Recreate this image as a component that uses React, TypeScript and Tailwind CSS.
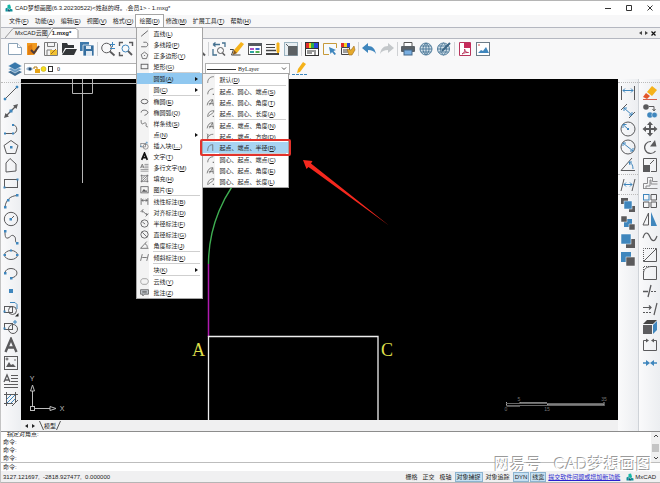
import { useState } from 'react';
import type { ReactNode } from 'react';
import clsx from 'clsx';

const DARK = '#5a5a5c';
const BLUE = '#3f86bd';
const AMBER = '#f5b21a';

type Item = { label: string; hotkey: string; icon?: string; arrow?: boolean };

const shapes: Record<string, ReactNode> = {
  /* file + view toolbar */
  newFile: (
    <g fill="#fff" stroke="#8ba3b8">
      <path d="M1.5 2.5h9l4 4v7h-13z" />
      <path d="M10.5 2.5v4h4" />
    </g>
  ),
  importFile: (
    <g>
      <path d="M2 2h10v8l-3 4H2z" fill="#f19a20" />
      <path d="M3 5l4-2 1 10-5 1z" fill="#e07c10" />
      <path d="M6 9l3 3 5-7" stroke="#4b3a3a" strokeWidth="2" />
    </g>
  ),
  saveAs: (
    <g>
      <path d="M1.5 1.5h12l1 1v12h-13z" fill="#f4f4f4" stroke="#7a7a7a" />
      <path d="M4.5 1.5v4h7v-4M4 14V9h5" stroke="#7a7a7a" />
      <rect x="7" y="9" width="7" height="5" fill="#f1c232" />
      <path d="M8 13l5-5" stroke="#a06a20" />
    </g>
  ),
  open: (
    <g fill="#333638">
      <path d="M1 2h5l1 2h6v3H4l-3 6z" />
      <path d="M5 8h11l-3 6H1z" />
    </g>
  ),
  save: (
    <g>
      <path d="M1 1h9v9H1z" fill="#3d78aa" />
      <path d="M4 4h11v11H4z" fill="#356e9f" stroke="#fff" strokeWidth=".7" />
      <path d="M7 5h5v3H7zM7 10h6v5H7z" fill="#dfe9f2" />
    </g>
  ),
  zoomPlus: (
    <g stroke={DARK}>
      <circle cx="6.500" cy="7" r="4.800" />
      <path d="M10 10.500l4.500 4" strokeWidth="1.800" />
      <path d="M12.500 1v5M10 3.500h5M10 7.500h5" stroke={BLUE} />
    </g>
  ),
  zoomExtents: (
    <g stroke={DARK}>
      <path d="M1.500 5V1.500H5M11 1.500h3.500V5M5 14.500H1.500V11" strokeWidth="1.400" />
      <circle cx="7.500" cy="7.500" r="3.500" stroke={BLUE} />
      <path d="M10 10l4 4" strokeWidth="1.800" />
    </g>
  ),
  zoomOut: (
    <g stroke={DARK}>
      <circle cx="7" cy="6" r="4.500" />
      <path d="M10 9.500l5 5" strokeWidth="2" />
    </g>
  ),
  zoomPrev: (
    <g stroke={DARK}>
      <path d="M2 3.500h7M2 3.500l2.500-2M2 3.500l2.500 2M11 2h3v4M2 8v6h4" stroke="#44708f" strokeWidth="1.300" />
      <circle cx="9.500" cy="9.500" r="3" />
      <path d="M11.500 12l2.500 2.500" strokeWidth="1.500" />
    </g>
  ),
  pencil: (
    <g>
      <path d="M12 1l3 2-7 9-4 1 1-4z" fill={AMBER} />
      <path d="M5 9l3 3-4 2z" fill="#8a5a20" />
      <path d="M1 8.500h3.500l-2 5.500h9" stroke="#444" />
    </g>
  ),
  propsList: (
    <g>
      <rect x="1.500" y="2.500" width="13" height="11" fill="#fff" stroke="#555" />
      <rect x="1" y="2" width="14" height="3" fill="#555a60" />
      <rect x="3" y="7" width="4" height="2" fill="#b04fc4" />
      <rect x="3" y="10" width="4" height="2" fill="#2fa4a0" />
      <rect x="8.500" y="7" width="4" height="2" fill="#3c62c8" />
      <rect x="8.500" y="10" width="4" height="2" fill="#50b050" />
    </g>
  ),
  lineWeight: (
    <g stroke="#444">
      <path d="M1 3.500h9M1 6.500h9" />
      <path d="M1 9.500h10" strokeWidth="1.500" />
      <path d="M1 13h13" strokeWidth="2" />
      <path d="M12 2h2v9l-1 1-1-1z" fill={AMBER} stroke={AMBER} />
    </g>
  ),
  block: (
    <g>
      <rect x="1.500" y="1.500" width="13" height="13" stroke="#9bb3c0" fill="#e8eef2" />
      <rect x="5" y="5" width="9.500" height="9.500" fill="#5d6164" />
      <path d="M3 3l3 3" stroke="#5d6164" />
    </g>
  ),
  palette: (
    <g>
      <rect x="1.500" y="1.500" width="13" height="13" fill="#fff" stroke="#333" />
      <path d="M2 2h3v5H2z" fill="#e22a2a" />
      <path d="M5 2h2v5H5z" fill="#f0d020" />
      <path d="M7 2h3v5H7z" fill="#2cae4a" />
      <path d="M10 2h4v5h-4z" fill="#2745d8" />
      <path d="M2 7.500h12M3 10h7M3 12h5M11 9v5" stroke="#333" />
    </g>
  ),
  selectArea: (
    <g>
      <path d="M7 13.500H1.500v-11h13V7" stroke="#c79a3a" fill="#f6fafc" />
      <path d="M7 6l7 3-2.500 1L14 13l-1.500 1-2.500-3-1.500 2z" fill={BLUE} />
    </g>
  ),
  paletteMatch: (
    <g>
      <path d="M1 2h3v4H1z" fill="#e22a2a" />
      <path d="M4 2h3v4H4z" fill="#f0d020" />
      <path d="M7 2h3v4H7z" fill="#2745d8" />
      <path d="M1.500 6.500h8v7h-8zM3 9h5M3 11h5" stroke="#444" />
      <path d="M7 8l4 1 3-4 1 4-3 5H9z" fill="#e5a92c" stroke="#9b6b20" strokeWidth=".6" />
    </g>
  ),
  undo: <path d="M1 7l6-5v3c5 0 7 3 8 8-2-3-4-4-8-4v3z" fill={BLUE} />,
  redo: <path d="M15 7L9 2v3c-5 0-7 3-8 8 2-3 4-4 8-4v3z" fill="#c3c7ca" />,
  printer: (
    <g>
      <path d="M4 1.500h8v4H4z" fill="#fff" stroke="#555" />
      <rect x="1" y="5" width="14" height="6" rx="1" fill="#5b6268" />
      <rect x="4" y="9" width="8" height="5" fill="#79aee0" stroke="#46698a" />
    </g>
  ),
  globe: (
    <g stroke="#527d9c">
      <circle cx="8" cy="8" r="6" fill="#d2e1ea" />
      <path d="M2 8h12M3 5h10M3 11h10M8 2v12M8 2c-4 3-4 9 0 12M8 2c4 3 4 9 0 12" />
    </g>
  ),
  globeEdit: (
    <g stroke="#527d9c">
      <circle cx="7.500" cy="8" r="6" fill="#d2e1ea" />
      <path d="M1.500 8h12M2.500 5h10M2.500 11h10M7.500 2c-4 3-4 9 0 12M7.500 2c4 3 4 9 0 12" />
      <path d="M6 10l8-8" stroke="#3b6584" strokeWidth="2" />
    </g>
  ),
  pdf: (
    <g>
      <path d="M2.500 1.500h11v13h-11z" fill="#fff" stroke="#b8345c" />
      <rect x="7" y="2" width="7" height="5" fill="#c62a5a" />
      <path d="M5 13c3-2 3-4 2.500-5 .5 3 2 3.500 4 3.500-2 0-4 0-6.500 1.500z" stroke="#b8345c" />
    </g>
  ),
  picture: (
    <g>
      <rect x="1.500" y="1.500" width="13" height="13" fill="#fff" stroke="#6c7c88" />
      <path d="M3 12l3-3 2 1 3-4 3 6z" fill={BLUE} />
      <circle cx="4" cy="4" r=".8" fill="#c33" />
    </g>
  ),
  layers: (
    <g>
      <path d="M8 8l7 3-7 4-7-4z" fill="#3c6c94" />
      <path d="M8 5l7 3-7 4-7-4z" fill="#6b9cc4" stroke="#fff" strokeWidth=".5" />
      <path d="M8 1l7 4-7 4-7-4z" fill="#3878ab" stroke="#fff" strokeWidth=".5" />
    </g>
  ),
  pencilLine: (
    <g>
      <path d="M11 1l3 2-6 8-3 1 1-4z" fill={AMBER} />
      <path d="M0 13.500h16" stroke={BLUE} strokeDasharray="3 1" />
    </g>
  ),

  /* draw tools */
  line: (
    <g>
      <path d="M2 14L14 2" stroke={DARK} />
      <path d="M1 13h2v2H1zM13 1h2v2h-2z" fill={BLUE} stroke={BLUE} strokeWidth=".5" />
    </g>
  ),
  ray: (
    <g>
      <path d="M3 13L13 3" stroke={DARK} strokeWidth="1.300" />
      <path d="M15 1l-1.500 5L10 2.500zM1 15l1.500-5L6 13.500z" fill={DARK} />
      <rect x="6.500" y="6.500" width="3" height="3" fill={BLUE} />
    </g>
  ),
  polyline: (
    <g>
      <path d="M1 12.500h9c5 0 5-8.500 0-8.500" stroke={DARK} />
      <path d="M1 11.500h2v2H1zM9 3h2v2H9zM9 11.500h2v2H9z" fill={BLUE} />
    </g>
  ),
  polygon: (
    <g>
      <path d="M8 1.500L15 6.500l-2.500 8h-9L1 6.500z" stroke={DARK} />
      <rect x="7" y="7" width="2.500" height="2.500" fill={BLUE} />
    </g>
  ),
  freePolygon: <path d="M7 1.500L13 7v7l-10 1V6z" stroke={DARK} />,
  rect: (
    <g>
      <rect x="1.500" y="4.500" width="13" height="8" stroke={DARK} />
      <path d="M13.500 3.500h2v2h-2zM.500 11.500h2v2h-2z" fill={BLUE} />
    </g>
  ),
  arc: (
    <g>
      <path d="M2 14C3 6 8 3 14 2.500" stroke={DARK} />
      <path d="M1 13h2.500v2.500H1zM4 6h2.500v2.500H4zM13 1h2.500v2.500H13z" fill={BLUE} />
    </g>
  ),
  circle: (
    <g>
      <circle cx="8" cy="8" r="6.700" stroke={DARK} />
      <path d="M8 8l3-3" stroke={DARK} />
      <rect x="6.500" y="7" width="2.500" height="2.500" fill={BLUE} />
    </g>
  ),
  spline: (
    <g>
      <path d="M2 2c0 4 0 8 3 7s3-4 6-2 0 6 3 7" stroke={DARK} />
      <path d="M1 1h2.500v2.500H1zM13 13h2.500v2.500H13z" fill={BLUE} />
    </g>
  ),
  ellipse: (
    <g>
      <ellipse cx="8" cy="8" rx="6.500" ry="4.500" stroke={DARK} />
      <path d="M.500 7H3v2H.500zM13 7h2.500v2H13zM7 2.500h2v2H7z" fill={BLUE} />
    </g>
  ),
  ellipseArc: (
    <g>
      <path d="M2 8C2 2 14 2 14 8c0 3-3 4.500-6 5" stroke={DARK} />
      <path d="M1 7h2.500v2.500H1zM7 12h2.500v2.500H7z" fill={BLUE} />
    </g>
  ),
  point: <rect x="6" y="6" width="4" height="4" fill={BLUE} />,
  makeBlock: (
    <g stroke={DARK}>
      <rect x="1.500" y="5.500" width="8" height="6" />
      <circle cx="9.500" cy="9.500" r="4" />
      <path d="M7 1.500h5l2 2V8" stroke={BLUE} />
      <path d="M15.500 12v3.500H12z" fill="#222" stroke="none" />
      <rect x=".500" y="9.500" width="2" height="2" fill={BLUE} stroke="none" />
    </g>
  ),
  insertBlock: (
    <g stroke={DARK}>
      <rect x="1.500" y="4.500" width="8" height="6" />
      <circle cx="10" cy="10" r="4.500" />
      <path d="M12 1v4M10 3h4" stroke={BLUE} />
      <rect x=".500" y="8.500" width="2" height="2" fill={BLUE} stroke="none" />
    </g>
  ),
  text: <path d="M2.500 15L8 2l5.500 13M5 10.500h6" stroke={DARK} strokeWidth="2.400" />,
  image: (
    <g>
      <rect x="1.500" y="1.500" width="13" height="13" stroke={DARK} />
      <path d="M3 12l3-5 2 3 2-1 3 3z" fill={DARK} />
      <circle cx="4" cy="4" r="1" stroke={DARK} />
      <circle cx="12" cy="5" r=".8" fill={DARK} />
    </g>
  ),
  mtext: (
    <g stroke={DARK}>
      <path d="M1 9L4 2l3 7M2 7h4" strokeWidth="1.300" />
      <path d="M8 2.500h7M8 5.500h7M8 8.500h7M1 11.500h14M1 14.500h14" />
    </g>
  ),
  hatch: (
    <g stroke={DARK}>
      <path d="M3.500 1v14M12.500 1v10M1 3.500h14M1 12.500h9" />
      <path d="M4 8l4-4M4 12l8-8M8 12l4-4" stroke={BLUE} />
      <path d="M9 15l6-6" />
    </g>
  ),

  /* dimension + order column */
  dimLinear: (
    <g stroke={DARK}>
      <path d="M1.500 1v14M14.500 1v14" />
      <path d="M3 5.500h10M3 5.500l2-2M3 5.500l2 2M13 5.500l-2-2M13 5.500l-2 2" stroke={BLUE} />
    </g>
  ),
  dimAligned: (
    <g stroke={DARK}>
      <path d="M1 7l6-6M9 15l6-6" />
      <path d="M4 5l8 7M4 5h3M4 5v3M12 12H9M12 12V9" stroke={BLUE} />
    </g>
  ),
  dimRadius: (
    <g>
      <circle cx="8" cy="8" r="7" stroke={DARK} />
      <path d="M8 8L3.500 4M3 3.500h3.500M3 3.500V7" stroke={BLUE} />
      <rect x="7" y="7" width="2" height="2" fill={BLUE} />
    </g>
  ),
  dimDiameter: (
    <g>
      <circle cx="8" cy="8" r="7" stroke={DARK} />
      <path d="M3 4l10 8M3 4h3M3 4v3M13 12h-3M13 12V9" stroke={BLUE} />
    </g>
  ),
  dimAngle: (
    <g>
      <path d="M12 1L1 13.500h14" stroke={DARK} />
      <path d="M9 5c3 1 4 4 4 7M9 5h3M9 5l1 3" stroke={BLUE} />
    </g>
  ),
  dimOblique: (
    <g stroke={DARK}>
      <path d="M4 2L1 14M15 2l-3 12" />
      <path d="M4 7.500h8M4 7.500l2-2M4 7.500l2 2M12 7.500l-2-2M12 7.500l-2 2" stroke={BLUE} />
    </g>
  ),
  orderFront: (
    <g>
      <path d="M1 1h7v6H1zM9 9h6v6H9z" fill={DARK} />
      <rect x="4" y="4" width="8" height="8" fill={BLUE} stroke="#fff" strokeWidth=".5" />
    </g>
  ),
  orderBack: (
    <g>
      <rect x="4" y="4" width="8" height="8" fill={BLUE} />
      <path d="M1 1h6v6H1zM9 9h6v6H9z" fill={DARK} stroke="#fff" strokeWidth=".5" />
    </g>
  ),
  orderAbove: (
    <g>
      <rect x="6" y="6" width="9" height="9" fill={DARK} />
      <rect x="1" y="1" width="10" height="10" fill={BLUE} stroke="#fff" strokeWidth=".5" />
    </g>
  ),
  orderBelow: (
    <g>
      <rect x="1" y="1" width="10" height="10" fill={BLUE} />
      <rect x="6" y="6" width="9" height="9" fill={DARK} stroke="#fff" strokeWidth=".5" />
    </g>
  ),

  /* modify column */
  erase: (
    <g>
      <path d="M10 1l5 4-5 6-5-4z" fill={AMBER} />
      <path d="M4 8l4 3-3 3-4-2z" fill="#e2562b" />
      <path d="M1 14.500h14" stroke="#d6604a" />
    </g>
  ),
  copy: (
    <g>
      <circle cx="4" cy="4" r="2.800" fill={DARK} />
      <circle cx="8" cy="12" r="2.800" fill={BLUE} />
      <circle cx="12.500" cy="12" r="2.800" fill={BLUE} stroke="#fff" strokeWidth=".5" />
      <path d="M7 3.500h5V7M10.500 6L12 8l1.500-2" stroke={DARK} />
    </g>
  ),
  move: (
    <g>
      <path d="M8 3v10M3 8h10" stroke={DARK} strokeWidth="2" />
      <path d="M8 .500L11 4H5zM8 15.500L5 12h6zM.500 8L4 5v6zM15.500 8L12 11V5z" fill={DARK} />
    </g>
  ),
  rotate: (
    <g>
      <path d="M9 2.500A6 6 0 1 0 13.500 12" stroke={DARK} strokeWidth="1.200" />
      <path d="M13 1l1.500 6.500H8z" fill={DARK} />
    </g>
  ),
  scale: (
    <g>
      <path d="M1.500 8V1.500h13v13H9" stroke={DARK} />
      <rect x="1" y="8" width="7" height="7" fill={DARK} />
      <path d="M8 7l4-4" stroke={DARK} />
    </g>
  ),
  offset: (
    <g stroke="#8c8c8e">
      <path d="M1.500 14V8.500h4v-6h5v4h5" />
      <path d="M4 14v-3h4V5h1v4h6.500M1.500 13.500h14" />
    </g>
  ),
  array: (
    <g stroke={DARK}>
      <rect x="1.500" y="1.500" width="5.500" height="5.500" stroke={BLUE} />
      <path d="M9 1.500h5.500V7H9zM1.500 9H7v5.500H1.500zM9 9h5.500v5.500H9z" />
    </g>
  ),
  mirror: (
    <g>
      <path d="M6.500 2v12H1z" stroke={DARK} />
      <path d="M9 1v14h6z" fill={BLUE} />
    </g>
  ),
  wave: <path d="M1 9c2-7 5-6 7-1s5 5 7-1" stroke={DARK} strokeWidth="1.200" />,
  chamfer: (
    <g stroke={DARK}>
      <path d="M1.500 14.500h13v-13M1.500 14.500L14.500 1.500" />
      <path d="M1.500 14V1.500H14" strokeDasharray="1 1" />
    </g>
  ),
  fillet: (
    <g stroke={DARK}>
      <path d="M1.500 8v6.500h13v-13H9C4 2 2 4 1.500 8" />
      <path d="M1.500 7V1.500H8" strokeDasharray="1 1" />
    </g>
  ),
  trim: (
    <g stroke={DARK}>
      <path d="M1 8.500h5M9 2L6 14" strokeWidth="1.300" />
      <path d="M9 8.500h6" strokeDasharray="2 1" />
    </g>
  ),
  extend: (
    <g stroke={DARK}>
      <path d="M1 6.500h8M7 4.500l2 2-2 2M15 2l-3 12" strokeWidth="1.200" />
      <path d="M1 11.500h8" strokeDasharray="2 1" />
    </g>
  ),
  cube: (
    <g>
      <path d="M1 6h9v9H1z" fill="#5d5d60" />
      <path d="M1 5l4-4h10l-4 4z" fill="#444" />
      <path d="M11 6l4-4v9l-4 4z" fill={BLUE} />
    </g>
  ),
  breakLine: (
    <g stroke={DARK}>
      <path d="M5 3.500H1.500v10h13v-10H11" />
      <path d="M4 1.500v4l3-2zM12 1.500v4l-3-2z" fill={DARK} stroke="none" />
    </g>
  ),
  join: (
    <g>
      <path d="M1 8h5M10 8h5" stroke={BLUE} strokeWidth="1.300" />
      <path d="M4 5v6l4-3zM12 5v6L8 8z" fill={BLUE} />
    </g>
  ),

  /* drop-down menu glyphs */
  mLine: <path d="M2 13L14 3" stroke={DARK} strokeWidth="1.600" />,
  mPolyline: <path d="M2 12h8c5 0 5-8 0-8H6" stroke={DARK} strokeWidth="1.500" />,
  mPolygon: (
    <g stroke={DARK} strokeWidth="1.400">
      <path d="M8 2l6 4.500-2.500 7h-7L2 6.500z" />
      <path d="M7 8h2" />
    </g>
  ),
  mRect: <rect x="2" y="4" width="12" height="8" stroke={DARK} strokeWidth="1.600" />,
  mEllipse: <ellipse cx="8" cy="8" rx="6" ry="4" stroke={DARK} strokeWidth="1.600" />,
  mEllipseArc: <path d="M2 8C2 2 14 3 14 8c0 2-3 4-6 5" stroke={DARK} strokeWidth="1.600" />,
  mSpline: <path d="M2 2c0 6 1 8 4 6s6-1 5 2 1 4 3 4" stroke={DARK} strokeWidth="1.400" />,
  mText: <path d="M3 14L8 2l5 12M5 10h6" stroke="#111" strokeWidth="3" />,
  mImage: (
    <g>
      <rect x="1.500" y="3" width="13" height="11" stroke={DARK} strokeWidth="1.400" />
      <path d="M3 12l4-5 3 3 1-1 2 3z" fill={DARK} />
    </g>
  ),
  mHatch: (
    <g stroke={DARK} strokeWidth="1.200">
      <path d="M3 1v14M13 1v14M1 3h14M1 13h14M4 8l4-4M4 12l8-8M8 12l4-4" />
    </g>
  ),
  mDimLinear: <path d="M2 2v12M14 2v12M3 6h10M6 4L3 6l3 2M10 4l3 2-3 2" stroke={DARK} strokeWidth="1.400" />,
  mDimAligned: <path d="M1 7l5-5M10 15l5-5M4 5l8 7M4 5v3M12 12V9" stroke={DARK} strokeWidth="1.400" />,
  mDimRadius: (
    <g stroke={DARK} strokeWidth="1.500">
      <circle cx="8" cy="8" r="6.500" />
      <path d="M9 9L4 5" />
    </g>
  ),
  mDimDiameter: (
    <g stroke={DARK} strokeWidth="1.500">
      <circle cx="8" cy="8" r="6.500" />
      <path d="M4 4l8 8" />
    </g>
  ),
  mDimAngle: <path d="M12 1L1 13h14M9 5c3 1 4 4 4 7" stroke={DARK} strokeWidth="1.400" />,
  mDimOblique: <path d="M4 2L1 14M15 2l-3 12M4 8h8" stroke={DARK} strokeWidth="1.400" />,
  cloud: <path d="M5 3h6c5 1 5 8 0 10H5C0 12 0 4 5 3z" stroke="#8a8a8a" strokeWidth="1.300" />,
  comment: (
    <g stroke={DARK} strokeWidth="1.400">
      <path d="M1 3h14v8H8l-3 3v-3H1z" fill="#c6ccd2" />
      <path d="M4 6h8M4 8.500h8" />
    </g>
  ),
  arcPlain: <path d="M3 14C3 7 7 3 14 3" stroke="#666" strokeWidth="1.400" />,
  arcCenter: (
    <g stroke="#666" strokeWidth="1.400">
      <path d="M3 13C3 7 7 3 13 3" />
      <path d="M12 13h2" strokeWidth="2" />
    </g>
  ),
  arcAngle: (
    <g stroke="#666" strokeWidth="1.400">
      <path d="M2 13C3 7 6 3 12 3M12 3L6 13M5 10h8M12 3l1 11" />
    </g>
  ),
  arcLength: (
    <g stroke="#666" strokeWidth="1.400">
      <path d="M3 14C3 7 7 3 14 3c0 5-5 5-10 10" />
      <path d="M12 13h2" strokeWidth="2" />
    </g>
  ),
  arcDir: <path d="M3 14V4M3 10c2-4 5-6 10-6M2 3l3 3" stroke="#666" strokeWidth="1.400" />,
  arcRadius: <path d="M3 14C3 7 6 3 12 3v11" stroke="#666" strokeWidth="1.400" />,
};

function Icon({ name, small }: { name: string; small?: boolean }) {
  return (
    <svg
      viewBox="0 0 16 16"
      fill="none"
      className={clsx('shrink-0', small ? 'size-[9px]' : 'size-4')}
      aria-hidden="true"
    >
      {shapes[name]}
    </svg>
  );
}

function ToolButton({ name }: { name: string }) {
  return (
    <button type="button" aria-label={name} className="flex size-4 shrink-0 items-center justify-center">
      <Icon name={name} />
    </button>
  );
}

const menus = [
  ['文件', 'F'],
  ['功能', 'A'],
  ['编辑', 'E'],
  ['视图', 'V'],
  ['格式', 'O'],
  ['绘图', 'D'],
  ['修改', 'M'],
  ['扩展工具', 'T'],
  ['帮助', 'H'],
];

const drawMenu: Item[][] = [
  [
    { label: '直线', hotkey: 'L', icon: 'mLine' },
    { label: '多线段', hotkey: 'P', icon: 'mPolyline' },
    { label: '正多边形', hotkey: 'Y', icon: 'mPolygon' },
    { label: '矩形', hotkey: 'G', icon: 'mRect' },
  ],
  [
    { label: '圆弧', hotkey: 'A', arrow: true },
    { label: '圆', hotkey: 'C', arrow: true },
  ],
  [
    { label: '椭圆', hotkey: 'E', icon: 'mEllipse' },
    { label: '椭圆弧', hotkey: 'Q', icon: 'mEllipseArc' },
    { label: '样条线', hotkey: 'S', icon: 'mSpline' },
    { label: '点', hotkey: 'N', arrow: true },
    { label: '插入块', hotkey: 'I...', icon: 'insertBlock' },
    { label: '文字', hotkey: 'T', icon: 'mText' },
    { label: '多行文字', hotkey: 'M', icon: 'mtext' },
    { label: '填充', hotkey: 'H', icon: 'mHatch' },
    { label: '图片', hotkey: 'E', icon: 'mImage' },
  ],
  [
    { label: '线性标注', hotkey: 'B', icon: 'mDimLinear' },
    { label: '对齐标注', hotkey: 'D', icon: 'mDimAligned' },
    { label: '半径标注', hotkey: 'F', icon: 'mDimRadius' },
    { label: '直径标注', hotkey: 'G', icon: 'mDimDiameter' },
    { label: '角度标注', hotkey: 'J', icon: 'mDimAngle' },
  ],
  [{ label: '倾斜标注', hotkey: 'K', icon: 'mDimOblique' }],
  [{ label: '块', hotkey: 'K', arrow: true }],
  [
    { label: '云线', hotkey: 'Y', icon: 'cloud' },
    { label: '批注', hotkey: 'Z', icon: 'comment' },
  ],
];

const arcMenu: Item[][] = [
  [{ label: '默认', hotkey: 'D', icon: 'arcPlain' }],
  [
    { label: '起点、圆心、端点', hotkey: 'S', icon: 'arcCenter' },
    { label: '起点、圆心、角度', hotkey: 'T', icon: 'arcAngle' },
    { label: '起点、圆心、长度', hotkey: 'A', icon: 'arcLength' },
  ],
  [
    { label: '起点、端点、角度', hotkey: 'N', icon: 'arcAngle' },
    { label: '起点、端点、方向', hotkey: 'D', icon: 'arcDir' },
    { label: '起点、端点、半径', hotkey: 'R', icon: 'arcRadius' },
  ],
  [
    { label: '圆心、起点、端点', hotkey: 'C', icon: 'arcCenter' },
    { label: '圆心、起点、角度', hotkey: 'E', icon: 'arcAngle' },
    { label: '圆心、起点、长度', hotkey: 'L', icon: 'arcLength' },
  ],
];

const topTools = [
  ['newFile', 'importFile', 'saveAs', 'open', 'save'],
  ['zoomPlus', 'zoomExtents', 'zoomPlus', 'zoomExtents', 'zoomPlus', 'zoomOut'],
  ['zoomPrev', 'pencil', 'propsList', 'lineWeight', 'block'],
  ['palette', 'selectArea', 'paletteMatch'],
  ['undo', 'redo'],
  ['printer', 'globe', 'globeEdit'],
  ['pdf', 'picture'],
];

const drawTools = [
  ['line', 'ray', 'polyline', 'polygon', 'freePolygon', 'rect', 'arc', 'circle', 'spline', 'ellipse',
    'ellipseArc', 'point', 'makeBlock', 'insertBlock', 'text', 'image', 'mtext', 'hatch'],
];

const dimTools = [
  ['dimLinear', 'dimAligned', 'dimRadius', 'dimDiameter', 'dimAngle'],
  ['dimOblique'],
  ['orderFront', 'orderBack', 'orderAbove', 'orderBelow'],
];

const modifyTools = [
  ['erase', 'copy', 'move', 'rotate', 'scale', 'offset', 'array', 'mirror', 'wave', 'chamfer', 'fillet',
    'trim', 'extend', 'cube', 'breakLine', 'join'],
];

function Label({ text, hotkey }: { text: string; hotkey: string }) {
  return (
    <span className="whitespace-nowrap">
      {text}(<u>{hotkey}</u>)
    </span>
  );
}

function MenuRow({ item, active, marked, children }: { item: Item; active?: boolean; marked?: boolean; children?: ReactNode }) {
  return (
    <li className="relative">
      <button
        type="button"
        className={clsx(
          'flex h-[11px] w-full items-center pr-1 pl-[2px] text-left',
          active && 'bg-[#90c8f0]',
          marked && 'bg-[#a8d4f2]'
        )}
      >
        <span className="mr-1 flex w-[10px] shrink-0 justify-center">
          {item.icon && <Icon name={item.icon} small />}
        </span>
        <Label text={item.label} hotkey={item.hotkey} />
        {item.arrow && (
          <svg viewBox="0 0 3 4" className="ml-auto h-1 w-[3px]" aria-hidden="true">
            <path d="M0 0l3 2-3 2z" fill="#111" />
          </svg>
        )}
      </button>
      {marked && <div className="pointer-events-none absolute -inset-x-[3px] -inset-y-[3px] z-10 rounded-xs border-2 border-[#e2332c]" />}
      {children}
    </li>
  );
}

function Menu({ groups, className, renderItem }: { groups: Item[][]; className: string; renderItem: (item: Item) => ReactNode }) {
  return (
    <div className={clsx('absolute z-20 border border-[#a5a5a5] bg-[linear-gradient(to_right,#f3f3f3_12px,#fff_12px)]', className)}>
      {groups.map((group, i) => (
        <ul key={i}>
          {i > 0 && <li role="separator" className="mr-[2px] ml-4 h-px bg-[#cfcfcf]" />}
          {group.map(renderItem)}
        </ul>
      ))}
    </div>
  );
}

function MenuBar() {
  const [open, setOpen] = useState('绘图');

  return (
    <nav className="flex h-3 shrink-0 items-stretch bg-[#f7f7f8] pl-[5px]">
      {menus.map(([text, hotkey]) => (
        <div key={text} className="relative flex">
          <button
            type="button"
            onClick={() => setOpen(text === open ? '' : text)}
            className={clsx('flex items-center px-[3px]', text === open && 'bg-white outline outline-[#a5a5a5]')}
          >
            <Label text={text} hotkey={hotkey} />
          </button>
          {text === '绘图' && open === text && (
            <Menu
              groups={drawMenu}
              className="top-full left-0 w-[67px]"
              renderItem={(item) => (
                <MenuRow key={item.label} item={item} active={item.label === '圆弧'}>
                  {item.label === '圆弧' && (
                    <Menu
                      groups={arcMenu}
                      className="top-0 left-full w-[87px]"
                      renderItem={(sub) => (
                        <MenuRow key={sub.label} item={sub} marked={sub.label === '起点、端点、半径'} />
                      )}
                    />
                  )}
                </MenuRow>
              )}
            />
          )}
        </div>
      ))}
    </nav>
  );
}

function Logo({ className }: { className: string }) {
  return (
    <svg viewBox="0 0 16 16" className={className} aria-hidden="true">
      <path d="M5 2l5-1 2 6-2 3-5-1z" fill="#14b8a6" />
      <path d="M1 9l4-2 1 8H1zM10 9l5 2v4H8z" fill="#0f8f9a" />
      <path d="M6 10l4 2-1 3H6z" fill="#1d4e6b" />
    </svg>
  );
}

function TitleBar() {
  return (
    <header className="flex h-[15px] shrink-0 items-center border-t border-[#b5b5b5] bg-white pl-1">
      <Logo className="size-2" />
      <h1 className="ml-[2px] whitespace-nowrap">CAD梦想画图(6.3.20230522)&lt;姓赵的呀。,会员1&gt; - 1.mxg*</h1>
      <div className="ml-auto flex">
        <button type="button" aria-label="最小化" className="flex h-3 w-[21px] items-center justify-center">
          <svg viewBox="0 0 6 6" className="size-[6px]" stroke="#333"><path d="M0 3.500h6" /></svg>
        </button>
        <button type="button" aria-label="最大化" className="flex h-3 w-[21px] items-center justify-center">
          <svg viewBox="0 0 6 6" className="size-[6px]" fill="none" stroke="#333"><path d="M.500.500h5v5h-5z" /></svg>
        </button>
        <button type="button" aria-label="关闭" className="flex h-3 w-[21px] items-center justify-center">
          <svg viewBox="0 0 6 6" className="size-[6px]" stroke="#333"><path d="M.500.500l5 5M5.500.500l-5 5" /></svg>
        </button>
      </div>
    </header>
  );
}

function FileTabs() {
  return (
    <div className="flex h-3 shrink-0 items-end border-y border-[#b4b7c0] bg-[#efeff0] pl-1">
      <div className="relative flex h-[10px] items-center">
        <svg viewBox="0 0 74 10" className="absolute inset-0 h-[10px] w-[74px]" aria-hidden="true">
          <path d="M0 10L8 .500h38" fill="none" stroke="#9a9a9a" />
          <path d="M42 10L48 .500h23l2 2V10" fill="#fff" stroke="#9a9a9a" />
        </svg>
        <button type="button" className="relative pl-[10px]">MxCAD云图</button>
        <button type="button" className="relative pl-1 font-bold">1.mxg*</button>
      </div>
      <div className="ml-auto flex h-full items-center gap-[3px] pr-1">
        <svg viewBox="0 0 3 4" className="h-1 w-[3px]"><path d="M3 0v4L0 2z" fill="#444" /></svg>
        <svg viewBox="0 0 3 4" className="h-1 w-[3px]"><path d="M0 0v4l3-2z" fill="#444" /></svg>
        <button type="button" aria-label="关闭标签">
          <svg viewBox="0 0 5 5" className="size-[5px]" stroke="#111" strokeWidth="1.200"><path d="M.500.500l4 4M4.500.500l-4 4" /></svg>
        </button>
      </div>
    </div>
  );
}

function Chevron() {
  return (
    <svg viewBox="0 0 6 4" className="pointer-events-none mr-[2px] h-1 w-[6px] shrink-0" fill="none" stroke="#555">
      <path d="M1 .500l2 2 2-2" />
    </svg>
  );
}

function LayerBar() {
  return (
    <div className="flex h-5 shrink-0 items-center bg-[#f8f8f9] pl-[6px]">
      <ToolButton name="layers" />
      <div className="ml-px flex h-3 w-[142px] items-center border border-[#b0b0b0] bg-white pl-px">
        <svg viewBox="0 0 27 8" className="h-2 w-[27px] shrink-0" fill="none" aria-hidden="true">
          <path d="M0 4c2-3 5-3 7 0-2 2-5 2-7 0z" fill="#9db7cf" />
          <circle cx="4" cy="4" r="1.500" fill="#254a70" />
          <path d="M8 4V2h3v2" stroke="#b07a10" />
          <rect x="9" y="4" width="5" height="4" fill="#e8a517" />
          <circle cx="17.500" cy="4" r="2.500" fill="#f6dc1c" stroke="#b8a010" strokeWidth=".5" />
          <rect x="22.500" y="1.500" width="4" height="5" fill="#fff" stroke="#333" />
        </svg>
        <select aria-label="图层" className="ml-1 min-w-0 flex-1 appearance-none font-['Liberation_Serif','Noto_Sans_CJK_SC',serif]">
          <option>0</option>
        </select>
        <Chevron />
      </div>
      <div className="ml-[2px] flex h-3 w-[35px] items-center border border-[#b0b0b0] bg-white">
        <select aria-label="颜色" className="min-w-0 flex-1 appearance-none">
          <option>ByLayer</option>
        </select>
      </div>
      <div className="ml-[2px] flex h-3 w-[85px] items-center border border-[#b0b0b0] bg-white">
        <span className="ml-px h-px w-[29px] bg-[#333]" />
        <select aria-label="线型" className="ml-[2px] min-w-0 flex-1 appearance-none font-['Liberation_Serif','Noto_Sans_CJK_SC',serif]">
          <option>ByLayer</option>
        </select>
        <Chevron />
      </div>
      <div className="ml-[2px]">
        <ToolButton name="pencilLine" />
      </div>
    </div>
  );
}

function ToolColumn({ groups, className }: { groups: string[][]; className?: string }) {
  return (
    <div className={clsx('flex shrink-0 flex-col items-center bg-gradient-to-r from-[#fafafb] to-[#eceef1] pt-[3px]', className)}>
      {groups.map((group, i) => (
        <div
          key={i}
          className={clsx(
            'flex flex-col items-center gap-[2px] self-stretch border-t border-dotted border-[#bbb] pt-[2px]',
            i > 0 && 'mt-px'
          )}
        >
          {group.map((name) => (
            <ToolButton key={name} name={name} />
          ))}
        </div>
      ))}
    </div>
  );
}

function Drawing() {
  return (
    <div className="relative min-h-0 flex-1 overflow-hidden bg-black">
      <svg className="absolute inset-0 size-full" fill="none">
        <g transform="translate(-21 -79)">
          {/* crosshair */}
          <g stroke="#b5b5b5">
            <path d="M21 83.500h162M82.500 79v104" />
            <path d="M72.500 79v14.500h20V79" />
          </g>

          {/* model geometry */}
          <path d="M208.500 264A139 139 0 0 1 249 166" stroke="#3fae52" strokeWidth="1.400" />
          <path d="M208.500 264v73" stroke="#b01bb0" strokeWidth="1.500" />
          <path d="M208.500 430v-93.500H378V430" stroke="#eee" strokeWidth="1.300" />
          <g fill="#dede4a" fontSize="18" className="font-['Liberation_Serif',serif]">
            <text x="192" y="356">A</text>
            <text x="381" y="356">C</text>
          </g>

          {/* pointer arrow */}
          <path d="M303 160l9.500 1-1.500 2.500L389 225.500l-80.500-58.500-2 2z" fill="#f5281e" />

          {/* UCS */}
          <g stroke="#bdbdbd">
            <rect x="30.500" y="406.500" width="4" height="4" />
            <path d="M32.500 406V391M30.500 391l2-6 2 6zM35 408.500h15M50 406.500l6 2-6 2z" />
          </g>
          <g fill="#bdbdbd" fontSize="7" textAnchor="middle" className="font-['Liberation_Sans',sans-serif]">
            <text x="32" y="381">Y</text>
            <text x="62" y="411">X</text>
          </g>

          {/* scale bar */}
          <g stroke="#a8a8a8">
            <path d="M506.500 402v4h13.500M520 402v2M547.500 403v3M604 402v4" />
            <path d="M520 403h27M547 405h57" strokeWidth="1.500" />
            <path d="M506 403.500h98M506 405.500h98" stroke="#666" />
          </g>
          <g fill="#777" fontSize="5" textAnchor="middle" className="font-['Liberation_Sans',sans-serif]">
            <text x="506" y="411">0</text>
            <text x="519" y="401">5</text>
            <text x="547" y="411">15</text>
            <text x="604" y="401">35</text>
          </g>
        </g>
      </svg>
    </div>
  );
}

function ModelTabs() {
  return (
    <div className="flex h-[11px] shrink-0 items-center gap-1 bg-[#f0f0f1] pl-1">
      <svg viewBox="0 0 3 4" className="h-1 w-[3px]"><path d="M3 0v4L0 2z" fill="#222" /></svg>
      <svg viewBox="0 0 3 4" className="h-1 w-[3px]"><path d="M0 0v4l3-2z" fill="#222" /></svg>
      <button type="button" className="flex items-center">
        <svg viewBox="0 0 5 9" className="h-[9px] w-[5px]" stroke="#555"><path d="M.500 0l4 9" /></svg>
        模型
        <svg viewBox="0 0 5 9" className="h-[9px] w-[5px]" stroke="#555"><path d="M4.500 0l-4 9" /></svg>
      </button>
    </div>
  );
}

function CommandPanel() {
  return (
    <section className="flex h-10 shrink-0 flex-col overflow-hidden border-t border-[#8c8c8c] bg-white">
      <div className="flex h-[31px] items-end justify-between border-b border-[#bdbdbd]">
        <div className="pl-[2px] text-[#222]">
          <p className="h-2 pl-1 leading-2">指定对角点:</p>
          <p className="h-2 leading-2">命令:</p>
          <p className="h-2 leading-2">命令:</p>
          <p className="h-2 leading-2">命令:</p>
        </div>
        <div className="flex h-full w-[9px] flex-col items-center justify-between bg-[#f0f0f0] py-[2px]">
          <svg viewBox="0 0 6 4" className="h-1 w-[6px]" fill="none" stroke="#444"><path d="M1 3l2-2 2 2" /></svg>
          <span className="mt-auto mb-1 h-2 w-[7px] bg-[#c4c4c4]" />
          <svg viewBox="0 0 6 4" className="h-1 w-[6px]" fill="none" stroke="#444"><path d="M1 1l2 2 2-2" /></svg>
        </div>
      </div>
      <label className="flex h-2 items-center pl-[2px] text-[#222]">
        命令:
        <input type="text" className="min-w-0 flex-1 outline-none" />
      </label>
    </section>
  );
}

const toggles = [
  { label: '栅格', on: false },
  { label: '正交', on: false },
  { label: '极轴', on: false },
  { label: '对象捕捉', on: true },
  { label: '对象追踪', on: false },
  { label: 'DYN', on: true },
  { label: '线宽', on: true },
];

function StatusBar() {
  return (
    <footer className="flex h-3 shrink-0 items-center border-b border-[#b5b5b5] bg-[#f0f0f1] pr-1 pl-[2px]">
      <span className="whitespace-pre">3127.121697,  -2818.927477,  0.000000</span>
      <div className="ml-auto flex items-center gap-px">
        {toggles.map(({ label, on }) => (
          <button
            key={label}
            type="button"
            aria-pressed={on}
            className={clsx(
              'flex h-[10px] items-center border px-px whitespace-nowrap',
              on ? 'border-[#8db4d0] bg-[#c5e0f2]' : 'border-transparent'
            )}
          >
            {label}
          </button>
        ))}
      </div>
      <a href="#feedback" className="ml-[2px] whitespace-nowrap text-[#2a1fd0] underline">提交软件问题或增加新功能</a>
      <Logo className="ml-[6px] size-2" />
      <span className="ml-px">MxCAD</span>
    </footer>
  );
}

export default function App() {
  return (
    <div className="relative flex h-screen w-full flex-col overflow-hidden border-l border-[#c4c4c4] bg-[#f8f8f9] font-['Liberation_Sans','Noto_Sans_CJK_SC',sans-serif] text-[6px] leading-none text-[#1c1c1c]">
      <TitleBar />
      <MenuBar />
      <FileTabs />

      <div className="flex h-5 shrink-0 items-center gap-[2px] pl-[6px]">
        {topTools.map((group, i) => (
          <div key={i} className="flex items-center gap-[2px]">
            {i > 0 && <span className="h-[14px] w-px bg-[#cfd1d4]" />}
            {group.map((name, j) => (
              <ToolButton key={j} name={name} />
            ))}
          </div>
        ))}
      </div>
      <LayerBar />

      <main className="flex min-h-0 flex-1">
        <ToolColumn groups={drawTools} className="w-5" />
        <div className="flex min-w-0 flex-1 flex-col">
          <Drawing />
          <ModelTabs />
        </div>
        <ToolColumn groups={dimTools} className="w-5" />
        <ToolColumn groups={modifyTools} className="w-[22px] border-l border-[#cfd3d8]" />
      </main>

      <CommandPanel />
      <StatusBar />

      {/* watermark */}
      <div className="pointer-events-none absolute right-2 bottom-[10px] flex items-center gap-3 text-base leading-none whitespace-nowrap text-white [text-shadow:-1px_-1px_0_#9a9a9a]">
        <span>网易号</span>
        <span>CAD梦想画图</span>
      </div>
    </div>
  );
}
